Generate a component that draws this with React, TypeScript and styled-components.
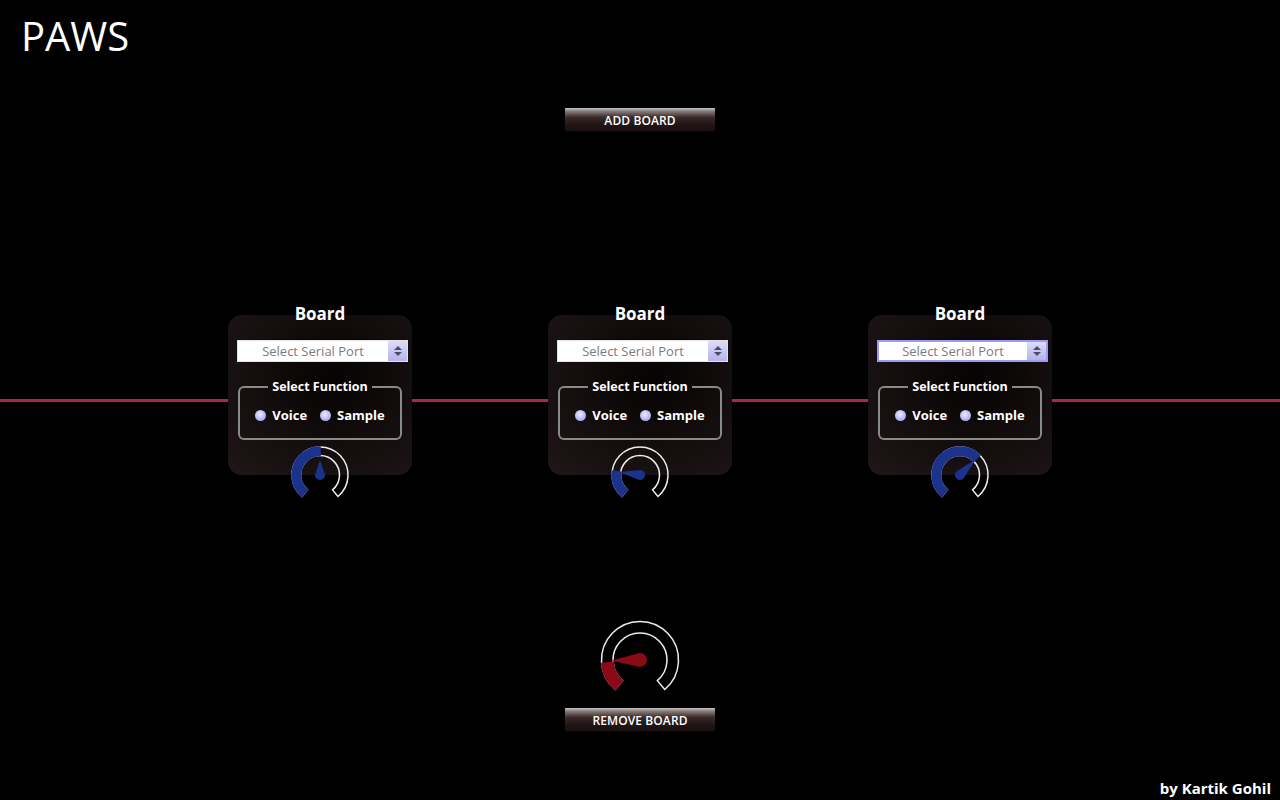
import styled, { createGlobalStyle } from "styled-components";

interface BoardInfo {
  id: number;
  value: number;
  needle: number;
  focused?: boolean;
}

const boards: BoardInfo[] = [
  { id: 1, value: 0, needle: 15 },
  { id: 2, value: -82, needle: 21 },
  { id: 3, value: 45, needle: 23, focused: true },
];

const GlobalStyle = createGlobalStyle`
  html, body {
    margin: 0;
    padding: 0;
    background: #000;
  }
  body {
    font-family: "Open Sans", "DejaVu Sans", sans-serif;
    color: #fff;
  }
`;

const Page = styled.div`
  height: 800px;
  display: flex;
  flex-direction: column;
  overflow: hidden;
`;

const Header = styled.h1`
  margin: 0;
  padding: 12px 0 0 21px;
  font-size: 40px;
  line-height: 48px;
  font-weight: 500;
`;

const ActionButton = styled.button<{ $top: number }>`
  align-self: center;
  margin-top: ${(p) => p.$top}px;
  width: 150px;
  height: 24px;
  padding: 1px 0 0;
  border: none;
  border-bottom: 1px solid #0a0505;
  background: linear-gradient(
    to bottom,
    #c4c4c4 0%,
    #8a7c7c 14%,
    #3a2a2a 40%,
    #221616 70%,
    #1a1010 100%
  );
  color: #fff;
  font-family: "Open Sans", "DejaVu Sans", sans-serif;
  font-size: 12px;
  font-weight: 600;
  letter-spacing: 0.1px;
  cursor: pointer;
`;

const BoardsRow = styled.div`
  margin-top: 172px;
  display: flex;
  justify-content: center;
  gap: 136px;
  background: linear-gradient(#a8284a, #a8284a) no-repeat 0 95px / 100% 3px;
`;

const BoardColumn = styled.div`
  display: flex;
  flex-direction: column;
  align-items: center;
  width: 184px;
`;

const BoardTitle = styled.div`
  position: relative;
  z-index: 1;
  font-size: 17px;
  line-height: 20px;
  font-weight: 700;
  margin-bottom: -9px;
`;

const Card = styled.div`
  box-sizing: border-box;
  width: 184px;
  height: 160px;
  padding: 25px 4px 0 9px;
  border-radius: 14px;
  background: radial-gradient(
    ellipse at 58% 40%,
    #060303 0%,
    #120c0c 45%,
    #201717 100%
  );
`;

const SelectWrap = styled.div<{ $focused?: boolean }>`
  box-sizing: border-box;
  display: flex;
  width: 171px;
  height: 22px;
  background: #fff;
  border: ${(p) => (p.$focused ? "2px solid #9c9cf0" : "1px solid #e4e4e4")};
`;

const Select = styled.select`
  flex: 1;
  min-width: 0;
  appearance: none;
  border: none;
  outline: none;
  background: transparent;
  color: #7c7c7c;
  font-family: "Open Sans", "DejaVu Sans", sans-serif;
  font-size: 13px;
  text-align: center;
  text-align-last: center;
  padding: 0;
`;

const ArrowBox = styled.div`
  width: 19px;
  display: flex;
  flex-direction: column;
  align-items: center;
  justify-content: center;
  gap: 2px;
  background: linear-gradient(to bottom, #dcdcfa, #b4b4ec);
`;

const Tri = styled.span<{ $down?: boolean }>`
  width: 0;
  height: 0;
  border-left: 4px solid transparent;
  border-right: 4px solid transparent;
  ${(p) =>
    p.$down ? "border-top: 4px solid #4c4c66;" : "border-bottom: 4px solid #4c4c66;"}
`;

const FunctionSet = styled.fieldset`
  box-sizing: border-box;
  width: 164px;
  margin: 17px 0 0 1px;
  padding: 12px 0 15px;
  border: 2px solid #8a8a8a;
  border-radius: 6px;
`;

const Legend = styled.legend`
  margin: 0 auto;
  padding: 0 4px;
  font-size: 12.5px;
  line-height: 16px;
  font-weight: 700;
`;

const RadioRow = styled.div`
  display: flex;
  justify-content: center;
  gap: 13px;
`;

const RadioLabel = styled.label`
  display: flex;
  align-items: center;
  gap: 6px;
  font-size: 13px;
  line-height: 16px;
  font-weight: 700;
`;

const Radio = styled.input`
  appearance: none;
  margin: 0;
  width: 11px;
  height: 11px;
  border-radius: 50%;
  background: radial-gradient(circle at 45% 40%, #eeeeff 0%, #b8b8f0 55%, #8a8ad8 100%);
`;

const KnobSvg = styled.svg<{ $overlap: number }>`
  display: block;
  margin-top: ${(p) => p.$overlap}px;
`;

const Footer = styled.div`
  margin-top: auto;
  align-self: flex-end;
  padding: 0 9px 2px 0;
  font-size: 15px;
  line-height: 20px;
  font-weight: 700;
`;

const START = -140;
const END = 140;

function pt(c: number, r: number, a: number) {
  const rad = (a * Math.PI) / 180;
  return `${(c + r * Math.sin(rad)).toFixed(2)} ${(c - r * Math.cos(rad)).toFixed(2)}`;
}

function sector(c: number, ro: number, ri: number, a1: number, a2: number) {
  const large = a2 - a1 > 180 ? 1 : 0;
  return `M ${pt(c, ro, a1)} A ${ro} ${ro} 0 ${large} 1 ${pt(c, ro, a2)} L ${pt(
    c,
    ri,
    a2
  )} A ${ri} ${ri} 0 ${large} 0 ${pt(c, ri, a1)} Z`;
}

function needlePath(c: number, blob: number, len: number) {
  return `M ${c - blob} ${c} L ${c} ${c - len} L ${c + blob} ${c} A ${blob} ${blob} 0 1 1 ${
    c - blob
  } ${c} Z`;
}

interface KnobProps {
  size: number;
  outer: number;
  inner: number;
  blob: number;
  value: number;
  needleAngle: number;
  needleLength: number;
  color: string;
  overlap: number;
}

function Knob({ size, outer, inner, blob, value, needleAngle, needleLength, color, overlap }: KnobProps) {
  const c = size / 2;
  return (
    <KnobSvg width={size} height={size} viewBox={`0 0 ${size} ${size}`} $overlap={overlap}>
      <path d={sector(c, outer, inner, START, END)} fill="none" stroke="#ececec" strokeWidth={1.5} />
      <path
        d={sector(c, outer, inner, START, value)}
        fill={color}
        stroke={color}
        strokeWidth={1.6}
      />
      <path
        d={needlePath(c, blob, needleLength)}
        fill={color}
        transform={`rotate(${needleAngle} ${c} ${c})`}
      />
    </KnobSvg>
  );
}

function Board({ info }: { info: BoardInfo }) {
  return (
    <BoardColumn>
      <BoardTitle>Board</BoardTitle>
      <Card>
        <SelectWrap $focused={info.focused}>
          <Select defaultValue="">
            <option value="">Select Serial Port</option>
          </Select>
          <ArrowBox>
            <Tri />
            <Tri $down />
          </ArrowBox>
        </SelectWrap>
        <FunctionSet>
          <Legend>Select Function</Legend>
          <RadioRow>
            <RadioLabel>
              <Radio type="radio" name={`fn-${info.id}`} />
              Voice
            </RadioLabel>
            <RadioLabel>
              <Radio type="radio" name={`fn-${info.id}`} />
              Sample
            </RadioLabel>
          </RadioRow>
        </FunctionSet>
      </Card>
      <Knob
        size={60}
        outer={28}
        inner={19.5}
        blob={5}
        value={info.value}
        needleAngle={info.value}
        needleLength={info.needle}
        color="#1b338c"
        overlap={-30}
      />
    </BoardColumn>
  );
}

export default function App() {
  return (
    <>
      <GlobalStyle />
      <Page>
        <Header>PAWS</Header>
        <ActionButton $top={48}>ADD BOARD</ActionButton>
        <BoardsRow>
          {boards.map((b) => (
            <Board key={b.id} info={b} />
          ))}
        </BoardsRow>
        <BoardColumn style={{ alignSelf: "center" }}>
          <Knob
            size={90}
            outer={38.5}
            inner={27}
            blob={7}
            value={-95}
            needleAngle={-91}
            needleLength={29}
            color="#8a0a16"
            overlap={110}
          />
        </BoardColumn>
        <ActionButton $top={3}>REMOVE BOARD</ActionButton>
        <Footer>by Kartik Gohil</Footer>
      </Page>
    </>
  );
}
